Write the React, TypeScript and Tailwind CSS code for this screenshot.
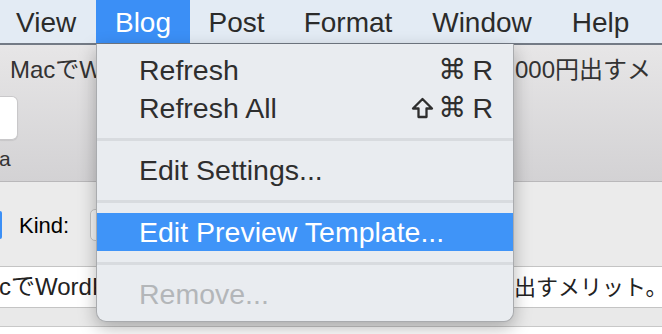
import React from "react";

const menus = [
  { label: "View", w: "w-[96px]", cls: "pl-[16px]" },
  { label: "Blog", w: "w-[94px]", cls: "justify-center bg-[#3b8ff6] text-white" },
  { label: "Post", w: "w-[93px]", cls: "justify-center" },
  { label: "Format", w: "w-[130px]", cls: "justify-center" },
  { label: "Window", w: "w-[138px]", cls: "justify-center" },
  { label: "Help", w: "w-[99px]", cls: "justify-center" },
];

function ShiftIcon() {
  return (
    <svg width="23" height="22" viewBox="0 0 23 22" fill="none" stroke="currentColor" strokeWidth="2.3" strokeLinejoin="round">
      <path d="M11.5 2 L21 11.5 H15.5 V20 H7.5 V11.5 H2 Z" />
    </svg>
  );
}

function Separator() {
  return (
    <div className="h-[24px] flex items-center">
      <div className="h-[3px] w-full bg-[#d8dbdf]" />
    </div>
  );
}

function Item({
  label,
  shift,
  cmd,
  active,
  disabled,
}: {
  label: string;
  shift?: boolean;
  cmd?: boolean;
  active?: boolean;
  disabled?: boolean;
}) {
  return (
    <div
      className={`h-[38px] flex items-center justify-between pl-[42px] pr-[20px] ${
        active ? "bg-[#3f94f8] text-white" : disabled ? "text-[#b3b6b9]" : "text-[#2e2e2e]"
      }`}
    >
      <span>{label}</span>
      {cmd && (
        <span className="flex items-center">
          {shift && (
            <span className="mr-[4px]">
              <ShiftIcon />
            </span>
          )}
          <span className="font-['DejaVu_Sans',sans-serif] text-[28px] leading-none">⌘</span>
          <span className="ml-[6px]">R</span>
        </span>
      )}
    </div>
  );
}

export default function App() {
  const jp = "font-['Liberation_Sans','Noto_Sans_CJK_JP',sans-serif]";
  return (
    <div className="relative w-[662px] h-[334px] overflow-hidden bg-white font-['Liberation_Sans',sans-serif]">
      {/* Menu bar */}
      <div className="h-[45px] flex bg-[#e3ebf4] border-b-2 border-[#737a85] text-[28px] text-[#2b2b2b]">
        {menus.map((m) => (
          <div key={m.label} className={`${m.w} h-[43px] flex items-center ${m.cls}`}>
            <span className="leading-none pt-[2px]">{m.label}</span>
          </div>
        ))}
      </div>

      {/* Window toolbar */}
      <div className="h-[137px] bg-gradient-to-b from-[#e7e6e7] to-[#d3d2d4] border-b border-[#b9b8ba] flex flex-col">
        <div className={`h-[48px] grid grid-cols-[515px_1fr] items-center text-[24px] text-[#333] ${jp}`}>
          <div className="w-[96px] overflow-hidden whitespace-nowrap pl-[10px] pt-[2px]">MacでWord</div>
          <div className="overflow-hidden whitespace-nowrap pt-[2px]">000円出すメ</div>
        </div>
        <div className="pt-[3px] pl-0">
          <div className="w-[18px] h-[44px] bg-white rounded-r-[6px] border border-l-0 border-[#c9c8ca] shadow-[0_1px_1px_rgba(0,0,0,0.08)]" />
        </div>
        <div className="text-[21px] text-[#333] leading-none pt-[8px] -ml-[1px]">a</div>
      </div>

      {/* Content */}
      <div className="bg-[#ebebeb] pt-[29px]">
        <div className="h-[28px] flex items-center">
          <div className="w-[2px] h-[28px] bg-[#3b8ff6] rounded-r-[2px]" />
          <span className="ml-[17px] text-[22px] text-black">Kind:</span>
          <div className="ml-[21px] w-[40px] h-[32px] bg-[#f7f7f7] border border-[#c5c5c5] rounded-[5px]" />
        </div>
        <div className="h-[27px]" />
        <div className={`h-[42px] bg-white border-t border-b border-[#c4c4c4] grid grid-cols-[514px_1fr] items-center text-[24px] text-[#222] ${jp}`}>
          <div className="w-[96px] overflow-hidden whitespace-nowrap">
            <span className="-ml-[1px]">cでWordP</span>
          </div>
          <div className="overflow-hidden whitespace-nowrap text-[22px]">出すメリット。</div>
        </div>
        <div className="h-[19px] bg-[#e9e9e9] border-b border-[#c8c8c8]" />
        <div className="h-[10px] bg-white" />
      </div>

      {/* Blog dropdown */}
      <div className="absolute left-[96px] top-[44px] w-[418px] bg-[#e9ecf0] rounded-b-[10px] border border-t-0 border-[#a9abae] shadow-[0_6px_18px_rgba(0,0,0,0.28)] pt-[7px] pb-[8px] text-[28.5px]">
        <Item label="Refresh" cmd />
        <Item label="Refresh All" cmd shift />
        <Separator />
        <Item label="Edit Settings..." />
        <Separator />
        <Item label="Edit Preview Template..." active />
        <Separator />
        <Item label="Remove..." disabled />
      </div>
    </div>
  );
}
